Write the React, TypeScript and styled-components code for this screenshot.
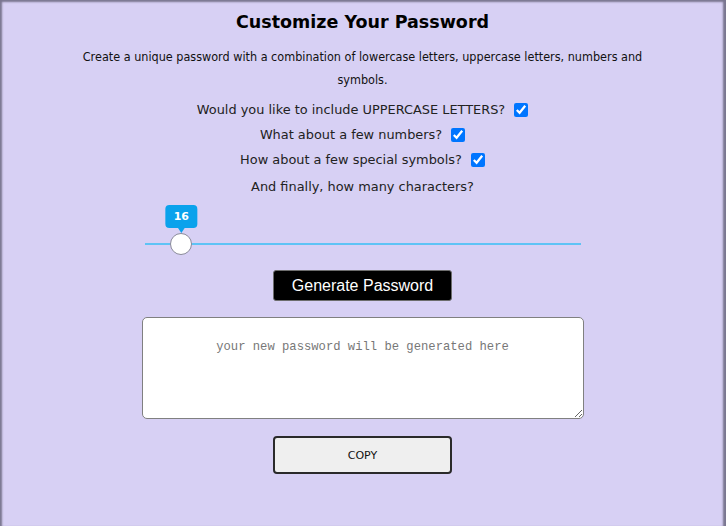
import React, { useState } from 'react';
import styled, { createGlobalStyle } from 'styled-components';

const GlobalStyle = createGlobalStyle`
	html, body {
		margin: 0;
		padding: 0;
	}

	body {
		background: #d7d0f4;
		font-family: 'DejaVu Sans', 'Noto Sans', sans-serif;
		color: #111;
	}
`;

const Page = styled.main`
	min-height: 526px;
	box-sizing: border-box;
	box-shadow: inset 3px 3px 2px -1px #7a7690, inset -4px 0 2px -1px #7a7690;
	display: flex;
	flex-direction: column;
	align-items: center;
	padding: 10px 1px 0 0;
`;

const Title = styled.h1`
	margin: 0;
	font-size: 17.5px;
	font-weight: 700;
	line-height: 24px;
	color: #000;
`;

const Intro = styled.p`
	width: 580px;
	margin: 11px 0 0;
	text-align: center;
	font-family: 'DejaVu Sans Condensed', 'DejaVu Sans', sans-serif;
	font-size: 12.5px;
	line-height: 23px;
`;

const Options = styled.div`
	display: flex;
	flex-direction: column;
	align-items: center;
	gap: 5px;
	margin-top: 9px;
`;

const OptionRow = styled.label<{ $last?: boolean }>`
	display: flex;
	align-items: center;
	gap: 9px;
	margin-top: ${(p) => (p.$last ? '2px' : '0')};
	font-size: 12.9px;
	line-height: 20px;
	color: #222;
`;

const Check = styled.input`
	width: 14px;
	height: 14px;
	margin: 0;
	accent-color: #0075ff;
`;

const SliderWrap = styled.div`
	position: relative;
	width: 436px;
	margin-top: 24px;
	height: 34px;
	display: flex;
	align-items: flex-end;
`;

const Range = styled.input`
	-webkit-appearance: none;
	appearance: none;
	width: 100%;
	height: 22px;
	margin: 0;
	background: transparent;

	&::-webkit-slider-runnable-track {
		height: 2px;
		background: #5ec3f5;
	}

	&::-webkit-slider-thumb {
		-webkit-appearance: none;
		width: 22px;
		height: 22px;
		margin-top: -10px;
		border-radius: 50%;
		background: #fff;
		border: 1px solid #8a8a9a;
		box-sizing: border-box;
	}
`;

const Bubble = styled.span`
	position: absolute;
	top: -16px;
	transform: translateX(-50%);
	background: #0aa2ec;
	color: #fff;
	font-family: 'DejaVu Sans', sans-serif;
	font-weight: 700;
	font-size: 11px;
	line-height: 23px;
	padding: 0 8px;
	border-radius: 4px;

	&::after {
		content: '';
		position: absolute;
		left: 50%;
		bottom: -5px;
		transform: translateX(-50%);
		border-left: 4px solid transparent;
		border-right: 4px solid transparent;
		border-top: 6px solid #0aa2ec;
	}
`;

const Button = styled.button<{ $dark?: boolean }>`
	width: 179px;
	box-sizing: border-box;
	cursor: pointer;
	background: ${(p) => (p.$dark ? '#000' : '#efefef')};
	color: ${(p) => (p.$dark ? '#fff' : '#111')};
	border: ${(p) => (p.$dark ? '1px solid #6d6d6d' : '2px solid #2a2a2a')};
	border-radius: ${(p) => (p.$dark ? '3px' : '4px')};
	font-family: ${(p) => (p.$dark ? "'Liberation Sans', Arial, sans-serif" : "'DejaVu Sans', sans-serif")};
	font-size: ${(p) => (p.$dark ? '16px' : '11px')};
	height: ${(p) => (p.$dark ? '31px' : '38px')};
	padding: 0;
`;

const Output = styled.textarea`
	width: 442px;
	height: 102px;
	box-sizing: border-box;
	margin: 16px 0 17px;
	padding: 22px 10px;
	border: 1px solid #808080;
	border-radius: 5px;
	background: #fff;
	text-align: center;
	font-family: 'Liberation Mono', 'DejaVu Sans Mono', monospace;
	font-size: 12.2px;

	&::placeholder {
		color: #777;
	}
`;

const GenerateButton = styled(Button)`
	margin-top: 15px;
`;

const MIN = 12;
const MAX = 76;

export default function App() {
	const [upper, setUpper] = useState(true);
	const [numbers, setNumbers] = useState(true);
	const [symbols, setSymbols] = useState(true);
	const [length, setLength] = useState(16);

	const ratio = (length - MIN) / (MAX - MIN);
	const thumbCenter = 11 + ratio * (436 - 22);

	return (
		<>
			<GlobalStyle />
			<Page>
				<Title>Customize Your Password</Title>
				<Intro>
					Create a unique password with a combination of lowercase letters, uppercase letters, numbers and
					symbols.
				</Intro>
				<Options>
					<OptionRow>
						Would you like to include UPPERCASE LETTERS?
						<Check type='checkbox' checked={upper} onChange={() => setUpper(!upper)} />
					</OptionRow>
					<OptionRow>
						What about a few numbers?
						<Check type='checkbox' checked={numbers} onChange={() => setNumbers(!numbers)} />
					</OptionRow>
					<OptionRow>
						How about a few special symbols?
						<Check type='checkbox' checked={symbols} onChange={() => setSymbols(!symbols)} />
					</OptionRow>
					<OptionRow $last>And finally, how many characters?</OptionRow>
				</Options>
				<SliderWrap>
					<Bubble style={{ left: thumbCenter }}>{length}</Bubble>
					<Range
						type='range'
						min={MIN}
						max={MAX}
						value={length}
						onChange={(e) => setLength(Number(e.target.value))}
					/>
				</SliderWrap>
				<GenerateButton $dark>Generate Password</GenerateButton>
				<Output placeholder='your new password will be generated here' readOnly />
				<Button>COPY</Button>
			</Page>
		</>
	);
}
